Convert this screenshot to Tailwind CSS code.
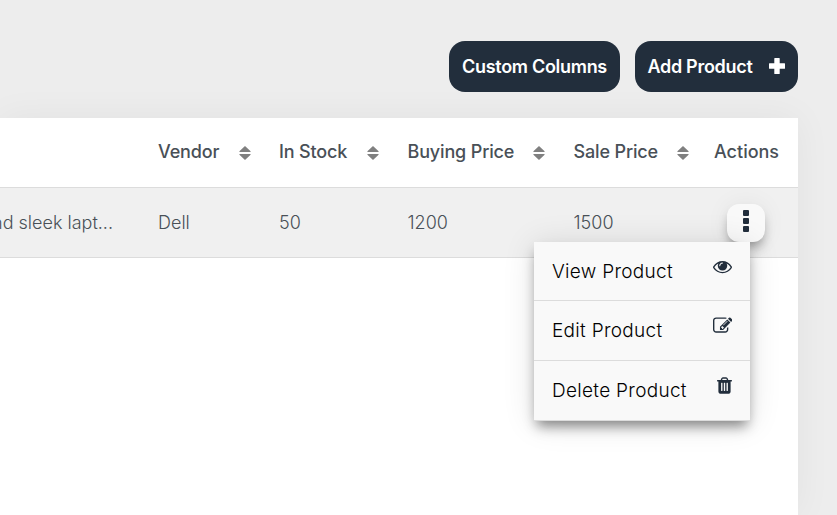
<!DOCTYPE html>
<html lang="en">
<head>
<meta charset="utf-8">
<title>Products</title>
<script src="https://cdn.jsdelivr.net/npm/@tailwindcss/browser@4"></script>
</head>
<body class="h-[515px] w-[837px] overflow-hidden bg-[#ededed] pt-[41px] font-['Inter',sans-serif] text-[18px] leading-[24px]">
<svg class="hidden">
  <symbol id="sort" viewBox="0 0 12 14"><path fill="#808080" d="M6 0 11.6 5.3Q11.9 6 11.2 6H.8Q.1 6 .4 5.3ZM6 14 .4 8.7Q.1 8 .8 8H11.200Q11.900 8 11.600 8.700Z"/></symbol>
</svg>
<div class="flex h-[51px] justify-end gap-[15px] pr-[39px] text-[18px] font-semibold tracking-[-0.3px] text-white">
  <button class="flex w-[171px] items-center justify-center rounded-[16px] bg-[#222e3c]">Custom Columns</button>
  <button class="flex w-[163px] items-center justify-between rounded-[16px] bg-[#222e3c] pr-[13px] pl-[12.500px]">Add Product
    <svg class="mb-px size-4" viewBox="0 0 16 16" fill="#fff"><path d="M5.800 0h4.400q.5 0 .5.500v4.800H15.500q.5 0 .5.500v4.400q0 .5-.5.500h-4.800v4.800q0 .5-.5.500H5.800q-.5 0-.5-.5v-4.800H.5q-.5 0-.5-.5V5.800q0-.5.5-.5h4.800V.5q0-.5.5-.5z"/></svg>
  </button>
</div>
<main class="mt-[26px] h-[397px] w-[798px] bg-white text-[#495057] shadow-[0_0_35px_rgba(0,0,0,0.05)]">
  <div class="grid h-[70px] grid-cols-[158px_121px_128.500px_166px_140.500px_84px] items-center border-b border-[#dcdcdc] pb-px font-medium tracking-[-0.15px]">
    <span></span>
    <span class="flex items-center justify-between pr-[28px]">Vendor<svg class="mt-[2px] h-[14px] w-3"><use href="#sort"/></svg></span>
    <span class="flex items-center justify-between pr-[28.500px]">In Stock<svg class="mt-[2px] h-[14px] w-3"><use href="#sort"/></svg></span>
    <span class="flex items-center justify-between pr-[28.500px]">Buying Price<svg class="mt-[2px] h-[14px] w-3"><use href="#sort"/></svg></span>
    <span class="flex items-center justify-between pr-[25px]">Sale Price<svg class="mt-[2px] h-[14px] w-3"><use href="#sort"/></svg></span>
    <span class="tracking-normal">Actions</span>
  </div>
  <div class="relative grid h-[70px] grid-cols-[158px_121px_128.500px_166px_153px_71px] items-center border-b border-[#dcdcdc] bg-[#f0f0f0] font-light">
    <span class="flex justify-end pr-[45px] whitespace-nowrap">and sleek lapt...</span>
    <span>Dell</span><span>50</span><span>1200</span><span>1500</span>
    <button class="flex size-[38px] flex-col items-center gap-[2px] rounded-[12px] bg-[#f9f9f9] pt-[6px] shadow-[0_8px_12px_-3px_rgba(0,0,0,0.4),0_0_25px_rgba(0,0,0,0.06)]">
      <i class="h-[6px] w-[6px] rounded-[1px] bg-[#222e3c]"></i><i class="h-[6px] w-[6px] rounded-[1px] bg-[#222e3c]"></i><i class="h-[6px] w-[6px] rounded-[1px] bg-[#222e3c]"></i>
    </button>
    <div class="absolute top-[54px] left-[534px] w-[216px] bg-[#f9f9f9] text-[19px] tracking-[0.3px] text-black shadow-[0_8px_12px_-3px_rgba(0,0,0,0.45),0_2px_30px_rgba(0,0,0,0.12)]">
      <div class="flex h-[59px] items-start justify-between border-b border-[#dcdcdc] pt-[15px] pr-[18px] pl-[18px]"><span class="pt-[3px]">View Product</span>
        <svg class="h-[19px] w-[19px]" viewBox="0 0 1792 1792" fill="#222e3c"><path d="M1664 960q-152-236-381-353 61 104 61 225 0 185-131.500 316.500t-316.500 131.500-316.500-131.500-131.500-316.500q0-121 61-225-229 117-381 353 133 205 333.500 326.500t434.500 121.500 434.500-121.500 333.500-326.500zm-720-384q0-20-14-34t-34-14q-125 0-214.500 89.500t-89.500 214.500q0 20 14 34t34 14 34-14 14-34q0-86 61-147t147-61q20 0 34-14t14-34zm848 384q0 34-20 69-140 230-376.500 368.500t-499.500 138.500-499.500-139-376.500-368q-20-35-20-69t20-69q140-229 376.500-368t499.500-139 499.500 139 376.500 368q20 35 20 69z"/></svg></div>
      <div class="flex h-[60px] items-start justify-between border-b border-[#dcdcdc] pt-[14px] pr-[18px] pl-[18px]"><span class="pt-[4px]">Edit Product</span>
        <svg class="mt-[0.500px] h-[19.500px] w-[19.500px]" viewBox="0 0 1792 1792" fill="#222e3c"><path d="M888 1184l116-116-152-152-116 116v56h96v96h56zm440-720q-16-16-33 1l-350 350q-17 17-1 33t33-1l350-350q17-17 1-33zm80 594v190q0 119-84.500 203.500t-203.500 84.500h-832q-119 0-203.500-84.500t-84.500-203.500v-832q0-119 84.500-203.500t203.500-84.500h832q63 0 117 25 15 7 18 23 3 17-9 29l-49 49q-14 14-32 8-23-6-45-6h-832q-66 0-113 47t-47 113v832q0 66 47 113t113 47h832q66 0 113-47t47-113v-126q0-13 9-22l64-64q15-15 35-7t20 29zm-96-738l288 288-672 672h-288v-288zm444 132l-92 92-288-288 92-92q28-28 68-28t68 28l152 152q28 28 28 68t-28 68z"/></svg></div>
      <div class="flex h-[60px] items-start justify-between border-b border-[#dcdcdc] pt-[15px] pr-[18px] pl-[18px]"><span class="pt-[3px]">Delete Product</span>
        <svg class="-mt-[0.500px] h-[19px] w-[15px]" viewBox="192 0 1408 1792" fill="#222e3c"><path d="M704 1376v-704q0-14-9-23t-23-9h-64q-14 0-23 9t-9 23v704q0 14 9 23t23 9h64q14 0 23-9t9-23zm256 0v-704q0-14-9-23t-23-9h-64q-14 0-23 9t-9 23v704q0 14 9 23t23 9h64q14 0 23-9t9-23zm256 0v-704q0-14-9-23t-23-9h-64q-14 0-23 9t-9 23v704q0 14 9 23t23 9h64q14 0 23-9t9-23zm-544-992h448l-48-117q-7-9-17-11h-317q-10 2-17 11zm928 32v64q0 14-9 23t-23 9h-96v948q0 83-47 143.500t-113 60.500h-832q-66 0-113-58.500t-47-141.500v-952h-96q-14 0-23-9t-9-23v-64q0-14 9-23t23-9h309l70-167q15-37 54-63t79-26h320q40 0 79 26t54 63l70 167h309q14 0 23 9t9 23z"/></svg></div>
    </div>
  </div>
</main>
</body>
</html>
